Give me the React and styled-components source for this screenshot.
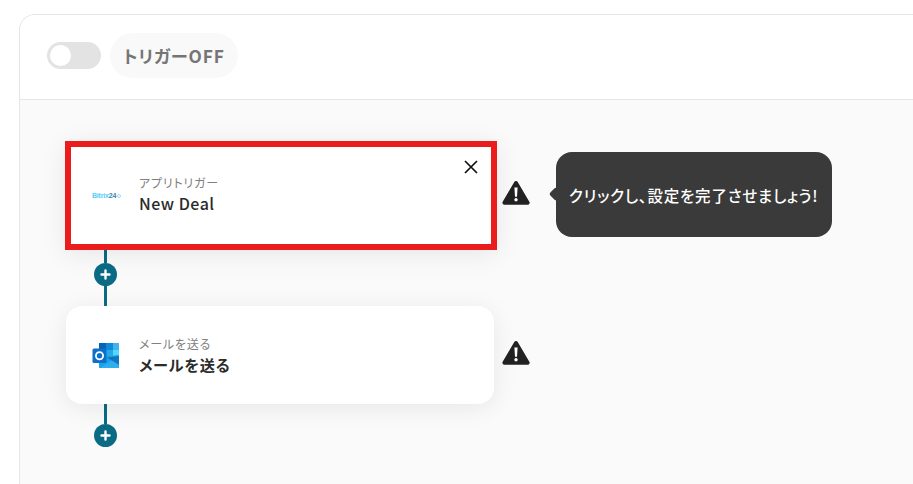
import React from "react";
import styled, { createGlobalStyle } from "styled-components";

const GlobalStyle = createGlobalStyle`
    html, body {
        margin: 0;
        height: 100%;
        overflow: hidden;
        background: #fff;
        font-family: "Noto Sans CJK JP", "Noto Sans", sans-serif;
        font-feature-settings: "palt";
        letter-spacing: 0.05em;
    }
`;

const Panel = styled.div`
    margin: 14px 0 0 19px;
    width: 894px;
    height: 470px;
    box-sizing: border-box;
    border: 1px solid #e6e6e6;
    border-right: none;
    border-bottom: none;
    border-radius: 16px 0 0 0;
    background: #fafafa;
    overflow: hidden;
`;

const Header = styled.div`
    height: 85px;
    box-sizing: border-box;
    padding: 0 0 4px 27px;
    display: flex;
    align-items: center;
    gap: 9px;
    background: #fff;
    border-bottom: 1px solid #e6e6e6;
`;

const Toggle = styled.div`
    width: 54px;
    height: 27px;
    box-sizing: border-box;
    border-radius: 14px;
    background: #e3e3e3;
    padding: 3px;
`;

const Knob = styled.div`
    width: 21px;
    height: 21px;
    border-radius: 50%;
    background: #fff;
`;

const StatusPill = styled.div`
    height: 45px;
    padding: 0 13px;
    display: flex;
    align-items: center;
    border-radius: 23px;
    background: #f9f9f9;
    color: #757575;
    font-size: 17.3px;
    font-weight: 700;
`;

const Flow = styled.div`
    padding: 41px 0 0 45px;
`;

const Row = styled.div`
    display: flex;
    align-items: center;
`;

const Card = styled.div`
    position: relative;
    box-sizing: border-box;
    width: ${(p) => (p.$selected ? "432px" : "428px")};
    height: ${(p) => (p.$selected ? "109px" : "98px")};
    margin-left: ${(p) => (p.$selected ? "0" : "1px")};
    padding: ${(p) => (p.$selected ? "0 0 3px 21px" : "0 0 0 26px")};
    display: flex;
    align-items: center;
    gap: 19px;
    background: #fff;
    border: ${(p) => (p.$selected ? "6px solid #ea1c1c" : "none")};
    border-radius: ${(p) => (p.$selected ? "0" : "16px")};
    box-shadow: 0 4px 24px rgba(0, 0, 0, 0.08);
`;

const LogoBox = styled.div`
    width: 28px;
    display: flex;
    align-items: center;
`;

const BitrixLogo = styled.div`
    display: flex;
    align-items: flex-start;
    margin-top: 3px;
    font-family: "Liberation Sans", sans-serif;
    font-size: 7px;
    font-weight: 700;
    line-height: 8px;
    letter-spacing: -0.2px;
    color: #4fd0f7;
    white-space: nowrap;
    font-feature-settings: normal;
`;

const BitrixNum = styled.span`
    color: #3d7fae;
`;

const BitrixMark = styled.span`
    flex: none;
    margin: 2px 0 0 1px;
    width: 2px;
    height: 2px;
    border: 1px solid #a8d8ee;
    border-radius: 50%;
`;

const CardText = styled.div`
    display: flex;
    flex-direction: column;
`;

const CardLabel = styled.div`
    font-size: 12px;
    line-height: 17px;
    color: #808080;
`;

const CardTitle = styled.div`
    font-size: ${(p) => (p.$latin ? "16px" : "15.2px")};
    line-height: 24px;
    font-weight: ${(p) => (p.$latin ? 500 : 700)};
    letter-spacing: ${(p) => (p.$latin ? "0.5px" : "0.05em")};
    color: #2b2b2b;
`;

const CloseButton = styled.button`
    position: absolute;
    top: 10px;
    right: 10px;
    width: 20px;
    height: 20px;
    padding: 0;
    border: none;
    background: none;
    display: flex;
    align-items: center;
    justify-content: center;
`;

const WarnIcon = styled.svg`
    display: block;
    width: 28px;
    height: 26px;
    margin-left: ${(p) => p.$left}px;
    margin-top: -5px;
`;

const Tooltip = styled.div`
    position: relative;
    margin-left: 26px;
    margin-top: -2px;
    width: 276px;
    height: 85px;
    box-sizing: border-box;
    padding-left: 13px;
    display: flex;
    align-items: center;
    border-radius: 16px;
    background: #3a3a3a;
    color: #fff;
    font-size: 15.5px;
    font-weight: 500;
    white-space: nowrap;

    &::before {
        content: "";
        position: absolute;
        left: -5px;
        top: 37px;
        width: 10px;
        height: 10px;
        background: #3a3a3a;
        transform: rotate(45deg);
        border-radius: 2px;
    }
`;

const Connector = styled.div`
    width: 23px;
    margin-left: 29px;
    height: ${(p) => p.$height}px;
    display: flex;
    flex-direction: column;
    align-items: center;
`;

const Line = styled.div`
    flex: none;
    width: 3px;
    height: ${(p) => p.$height}px;
    background: #0b6b85;
`;

const AddButton = styled.div`
    flex: none;
    width: 23px;
    height: 23px;
    border-radius: 50%;
    background: #0b6b85;
    display: flex;
    align-items: center;
    justify-content: center;
`;

const Warn = ({ left }) => (
    <WarnIcon $left={left} viewBox="0 0 28 26">
        <path
            d="M14 3 L25.6 22.8 H2.4 Z"
            fill="#222"
            stroke="#222"
            strokeWidth="4"
            strokeLinejoin="round"
        />
        <path d="M12.4 7.5 h3.2 l-.6 9.2 h-2 Z" fill="#fff" />
        <circle cx="14" cy="19.8" r="1.7" fill="#fff" />
    </WarnIcon>
);

const Plus = () => (
    <svg width="11" height="11" viewBox="0 0 11 11">
        <path d="M5.5 1.5v8M1.5 5.5h8" stroke="#fff" strokeWidth="2.4" strokeLinecap="round" />
    </svg>
);

const OutlookLogo = () => (
    <svg width="28" height="28" viewBox="0 -1 28 28">
        <rect x="7" y="1" width="20" height="25" rx="1.5" fill="#0f6cbd" />
        <rect x="7" y="1" width="7" height="7" fill="#0364b8" />
        <rect x="14" y="1" width="7" height="7" fill="#0f8ad8" />
        <rect x="21" y="1" width="6" height="7" fill="#3fb3ea" />
        <rect x="7" y="8" width="7" height="7" fill="#0f78d4" />
        <rect x="14" y="8" width="7" height="7" fill="#28a8ea" />
        <rect x="21" y="8" width="6" height="7" fill="#50d9ff" />
        <path d="M7 15 L27 13 V24.5 A1.5 1.5 0 0 1 25.5 26 H8.5 A1.5 1.5 0 0 1 7 24.5 Z" fill="#1aa3e8" />
        <path d="M8 26 L27 14 V24.5 A1.5 1.5 0 0 1 25.5 26 Z" fill="#2fb0ee" />
        <path d="M15 15.5 L27 23 V14 Z" fill="#0a5fa8" opacity="0.7" />
        <rect x="0.5" y="6.5" width="14" height="14.5" rx="1.5" fill="#0d6fc9" />
        <circle cx="7.5" cy="13.7" r="3.6" fill="none" stroke="#fff" strokeWidth="1.8" />
    </svg>
);

const Bitrix = () => (
    <BitrixLogo>
        Bitrix<BitrixNum>24</BitrixNum>
        <BitrixMark />
    </BitrixLogo>
);

const App = () => {
    return (
        <>
            <GlobalStyle />
            <Panel>
                <Header>
                    <Toggle>
                        <Knob />
                    </Toggle>
                    <StatusPill>トリガーOFF</StatusPill>
                </Header>
                <Flow>
                    <Row>
                        <Card $selected>
                            <LogoBox>
                                <Bitrix />
                            </LogoBox>
                            <CardText>
                                <CardLabel>アプリトリガー</CardLabel>
                                <CardTitle $latin>New Deal</CardTitle>
                            </CardText>
                            <CloseButton aria-label="close">
                                <svg width="14" height="14" viewBox="0 0 14 14">
                                    <path d="M1 1l12 12M13 1L1 13" stroke="#111" strokeWidth="1.7" />
                                </svg>
                            </CloseButton>
                        </Card>
                        <Warn left={5} />
                        <Tooltip>クリックし、設定を完了させましょう!</Tooltip>
                    </Row>
                    <Connector $height={56}>
                        <Line $height={13} />
                        <AddButton>
                            <Plus />
                        </AddButton>
                        <Line $height={20} />
                    </Connector>
                    <Row>
                        <Card>
                            <LogoBox>
                                <OutlookLogo />
                            </LogoBox>
                            <CardText>
                                <CardLabel>メールを送る</CardLabel>
                                <CardTitle>メールを送る</CardTitle>
                            </CardText>
                        </Card>
                        <Warn left={8} />
                    </Row>
                    <Connector $height={43}>
                        <Line $height={20} />
                        <AddButton>
                            <Plus />
                        </AddButton>
                    </Connector>
                </Flow>
            </Panel>
        </>
    );
};

export default App;
